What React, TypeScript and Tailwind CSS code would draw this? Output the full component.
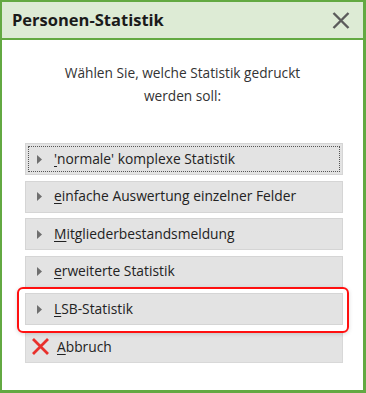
const items = [
  { key: 'n', first: "'", rest: "normale' komplexe Statistik", focused: true },
  { key: 'e', first: 'e', rest: 'infache Auswertung einzelner Felder' },
  { key: 'm', first: 'M', rest: 'itgliederbestandsmeldung' },
  { key: 'w', first: 'e', rest: 'rweiterte Statistik' },
  { key: 'l', first: 'L', rest: 'SB-Statistik', marked: true },
];

function Triangle() {
  return (
    <svg width="5" height="9" viewBox="0 0 5 9" className="shrink-0">
      <path d="M0 0 L5 4.5 L0 9 Z" fill="#6f6f6f" />
    </svg>
  );
}

export default function App() {
  return (
    <div
      className="w-[366px] h-[393px] flex flex-col bg-white border-t-2 border-l-2 border-r-[3px] border-b-[3px] border-[#63a942] text-[#222]"
      style={{ fontFamily: '"Open Sans", "Noto Sans", sans-serif' }}
    >
      {/* title bar */}
      <div className="h-[38px] shrink-0 flex items-center justify-between bg-[#ddebd5] border-b-2 border-[#63a942] pl-[10px] pr-[13px]">
        <span className="text-[16.5px] font-bold text-[#1a1a1a]">Personen-Statistik</span>
        <svg width="18" height="17" viewBox="0 0 18 17">
          <path d="M1.5 1 L16.5 16 M16.5 1 L1.5 16" stroke="#5b5b5b" strokeWidth="2.4" />
        </svg>
      </div>

      <div className="flex-1 flex flex-col pt-[21px]">
        <p className="text-[13.7px] leading-[23px] text-center text-[#333] px-[50px]">
          Wählen Sie, welche Statistik gedruckt werden soll:
        </p>

        <div className="mt-[36px] ml-[23px] w-[318px] flex flex-col gap-[5.6px]">
          {items.map((it) => (
            <div key={it.key} className="relative">
              <div className="h-[32px] flex items-center gap-[12px] pl-[11px] bg-[#e3e3e3] border border-[#d5d5d5] relative">
                {it.focused && (
                  <div className="absolute inset-[2px] border border-dotted border-[#555]" />
                )}
                <Triangle />
                <span className="text-[13.8px] text-[#222]">
                  <span className="underline underline-offset-2">{it.first}</span>
                  {it.rest}
                </span>
              </div>
              {it.marked && (
                <div className="absolute left-[-8px] top-[-6px] w-[332px] h-[46px] rounded-[6px] border-2 border-[#ff1010] shadow-[0_1px_4px_rgba(0,0,0,0.15)]" />
              )}
            </div>
          ))}
          <div className="h-[32px] flex items-center gap-[7px] pl-[5px] bg-[#e3e3e3] border border-[#d8d8d8]">
            <svg width="19" height="19" viewBox="0 0 19 19">
              <path d="M2 2 L17 17 M17 2 L2 17" stroke="#e8302c" strokeWidth="2.8" />
            </svg>
            <span className="text-[13.8px] text-[#222]">
              <span className="underline underline-offset-2">A</span>bbruch
            </span>
          </div>
        </div>
      </div>
    </div>
  );
}
